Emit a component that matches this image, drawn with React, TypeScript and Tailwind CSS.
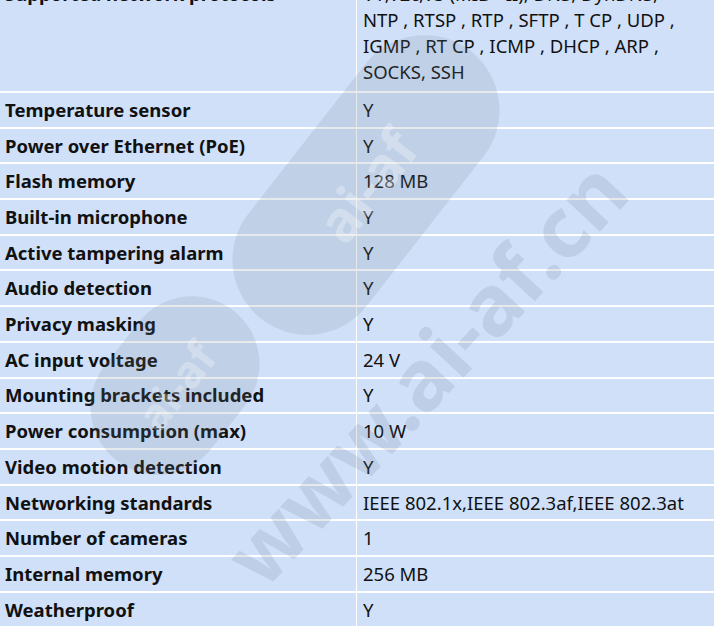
const rows: [string, string][] = [
  ["Temperature sensor", "Y"],
  ["Power over Ethernet (PoE)", "Y"],
  ["Flash memory", "128 MB"],
  ["Built-in microphone", "Y"],
  ["Active tampering alarm", "Y"],
  ["Audio detection", "Y"],
  ["Privacy masking", "Y"],
  ["AC input voltage", "24 V"],
  ["Mounting brackets included", "Y"],
  ["Power consumption (max)", "10 W"],
  ["Video motion detection", "Y"],
  ["Networking standards", "IEEE 802.1x,IEEE 802.3af,IEEE 802.3at"],
  ["Number of cameras", "1"],
  ["Internal memory", "256 MB"],
  ["Weatherproof", "Y"],
];

const protocolLines = [
  "V1,V2c,V3 (MIB - II), DNS, DynDNS,",
  "NTP , RTSP , RTP , SFTP , T CP , UDP ,",
  "IGMP , RT CP , ICMP , DHCP , ARP ,",
  "SOCKS, SSH",
];

// faint site watermark laid over the table
function Watermark() {
  return (
    <div className="pointer-events-none absolute inset-0 overflow-hidden">
      <div className="absolute left-[196px] top-[110px] flex h-[150px] w-[340px] rotate-[-52deg] items-center justify-center rounded-full bg-[rgba(115,128,150,0.17)]">
        <span className="text-[56px] font-bold text-[rgba(255,255,255,0.3)]">ai-af</span>
      </div>
      <div className="absolute left-[80px] top-[318px] flex h-[135px] w-[190px] rotate-[-52deg] items-center justify-center rounded-full bg-[rgba(115,128,150,0.17)]">
        <span className="text-[44px] font-bold text-[rgba(255,255,255,0.3)]">ai-af</span>
      </div>
      <div className="absolute left-[95px] top-[330px] w-[660px] rotate-[-47deg] text-center text-[84px] font-bold leading-none text-[rgba(115,128,150,0.18)]">
        www.ai-af.cn
      </div>
    </div>
  );
}

export default function App() {
  return (
    <div className="relative h-[627px] w-[715px] overflow-hidden bg-white font-['Noto_Sans',sans-serif] text-[18.5px] text-[#111]">
      <div className="mt-[-25px] border-r border-white bg-[#cfe0f8]">
        <div className="grid grid-cols-[357px_1fr] border-b-2 border-white">
          <div className="border-r border-white px-[5px] pt-[6px] font-bold leading-[26px]">
            Supported network protocols
          </div>
          <div className="px-[6px] py-[6px] leading-[26px]">
            {protocolLines.map((l) => (
              <div key={l} className="whitespace-nowrap">{l}</div>
            ))}
          </div>
        </div>
        {rows.map(([label, value]) => (
          <div key={label} className="grid h-[35.7px] grid-cols-[357px_1fr] items-center border-b-2 border-white">
            <div className="flex h-full items-center whitespace-nowrap border-r border-white px-[5px] font-bold">
              {label}
            </div>
            <div className="whitespace-nowrap px-[6px]">{value}</div>
          </div>
        ))}
      </div>
      <Watermark />
    </div>
  );
}
